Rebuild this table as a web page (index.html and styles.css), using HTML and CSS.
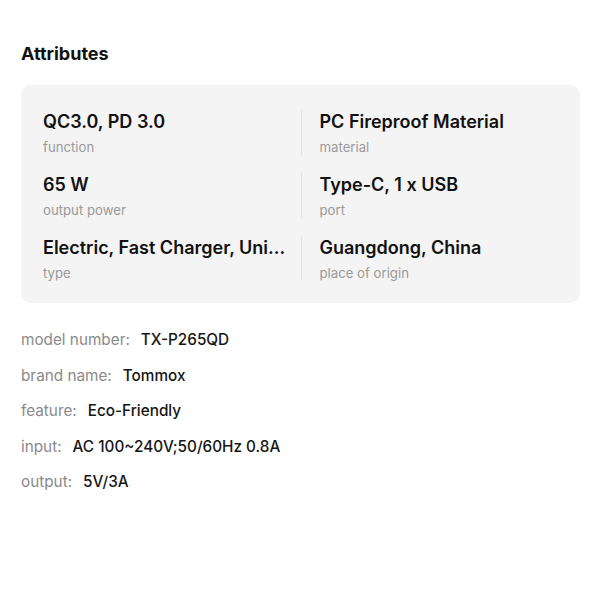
FILE: index.html
```html
<!DOCTYPE html>
<html lang="en">

<head>
    <meta charset="UTF-8">
    <title>Attributes</title>
    <link rel="stylesheet" href="styles.css">
</head>

<body>
    <div class="page">
        <h2 class="title">Attributes</h2>
        <div class="card">
            <div class="cell">
                <div class="value">QC3.0, PD 3.0</div>
                <div class="label">function</div>
            </div>
            <div class="cell right">
                <div class="value">PC Fireproof Material</div>
                <div class="label">material</div>
            </div>
            <div class="cell">
                <div class="value">65 W</div>
                <div class="label">output power</div>
            </div>
            <div class="cell right">
                <div class="value">Type-C, 1 x USB</div>
                <div class="label">port</div>
            </div>
            <div class="cell">
                <div class="value">Electric, Fast Charger, Universal, Portable</div>
                <div class="label">type</div>
            </div>
            <div class="cell right">
                <div class="value">Guangdong, China</div>
                <div class="label">place of origin</div>
            </div>
        </div>
        <ul class="list">
            <li><span class="key">model number:</span><span class="val">TX-P265QD</span></li>
            <li><span class="key">brand name:</span><span class="val">Tommox</span></li>
            <li><span class="key">feature:</span><span class="val">Eco-Friendly</span></li>
            <li><span class="key">input:</span><span class="val">AC 100~240V;50/60Hz 0.8A</span></li>
            <li><span class="key">output:</span><span class="val">5V/3A</span></li>
        </ul>
    </div>
</body>

</html>
```

FILE: styles.css
```css
* {
    box-sizing: border-box;
}

body {
    margin: 0;
    background: #fff;
    font-family: Inter, "Noto Sans", sans-serif;
    color: #1a1a1a;
}

.page {
    padding: 42px 20px 0 21px;
}

.title {
    margin: 0;
    font-size: 18px;
    line-height: 24px;
    font-weight: 700;
    color: #111;
}

.card {
    margin-top: 19px;
    background: #f4f4f4;
    border-radius: 10px;
    padding: 25px 22px 22px;
    display: grid;
    grid-template-columns: 1fr 1fr;
    row-gap: 18px;
}

.cell {
    min-width: 0;
    padding-top: 2px;
    padding-right: 13px;
}

.cell.right {
    border-left: 1px solid #e4e4e4;
    padding-left: 18px;
}

.value {
    font-size: 18px;
    line-height: 20px;
    font-weight: 600;
    color: #111;
    white-space: nowrap;
    overflow: hidden;
    text-overflow: ellipsis;
}

.label {
    margin-top: 7px;
    font-size: 13.2px;
    line-height: 16px;
    color: #9a9a9a;
}

.list {
    list-style: none;
    margin: 19px 0 0;
    padding: 0;
}

.list li {
    font-size: 15.3px;
    line-height: 35.5px;
}

.key {
    color: #8a8a8a;
    margin-right: 11px;
}

.val {
    font-weight: 500;
    color: #151515;
}
```
